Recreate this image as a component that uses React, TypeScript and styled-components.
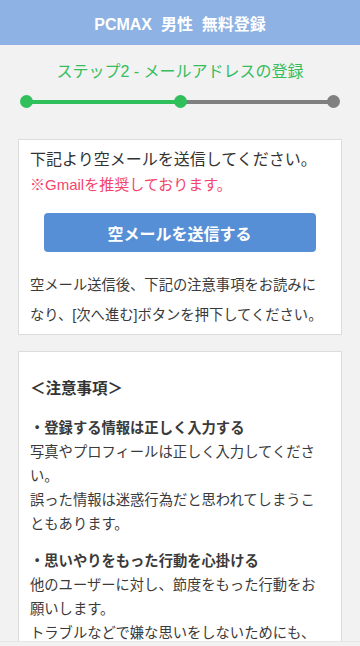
import React from "react";
import styled, { createGlobalStyle } from "styled-components";

const Global = createGlobalStyle`
  html, body { margin: 0; padding: 0; background: #f2f2f2; }
  body { font-family: "Liberation Sans", "Noto Sans CJK JP", sans-serif; color: #3a3a3a; }
  * { box-sizing: border-box; }
`;

const Header = styled.header`
  height: 45px;
  background: #8db2e3;
  display: flex;
  align-items: center;
  justify-content: center;
  color: #fff;
  font-weight: 700;
  font-size: 16px;
  white-space: pre;
`;

const Main = styled.main`
  padding: 0 18px;
`;

const StepTitle = styled.h2`
  margin: 15px 0 0;
  text-align: center;
  color: #36bd5c;
  font-weight: 400;
  font-size: 16px;
  line-height: 24px;
`;

const Track = styled.div`
  margin: 11px 8px 0;
  height: 13px;
  display: flex;
  align-items: center;
`;

const Segment = styled.div<{ $color: string }>`
  flex: 1;
  height: 4px;
  background: ${(p) => p.$color};
`;

const Dot = styled.span<{ $color: string }>`
  width: 13px;
  height: 13px;
  border-radius: 50%;
  background: ${(p) => p.$color};
  flex: none;
  margin: 0 -6px;
  position: relative;
  z-index: 1;
`;

const Card = styled.section<{ $top: number }>`
  margin-top: ${(p) => p.$top}px;
  background: #fff;
  border: 1px solid #dcdcdc;
  padding: 8px 12px 4px 11px;
`;

const Lead = styled.p`
  margin: 0;
  font-size: 16px;
  line-height: 24px;
  color: #333;
`;

const Note = styled.p`
  margin: 1px 0 0;
  font-size: 15px;
  line-height: 24px;
  color: #f4446c;
`;

const Button = styled.button`
  display: block;
  margin: 16px auto 0;
  width: 272px;
  height: 39px;
  border: none;
  border-radius: 4px;
  background: #578fd7;
  color: #fff;
  font-family: inherit;
  font-weight: 700;
  font-size: 16px;
`;

const Body = styled.p<{ $lh?: number; $top?: number }>`
  margin: ${(p) => p.$top ?? 0}px 0 0;
  font-size: 14.3px;
  line-height: ${(p) => p.$lh ?? 24}px;
  color: #3a3a3a;
`;

const NoticeCard = styled.section`
  margin-top: 16px;
  background: #fff;
  border: 1px solid #dcdcdc;
  border-bottom: none;
  padding: 25px 12px 20px 11px;
`;

const NoticeHeading = styled.h3`
  margin: 0;
  font-size: 15.5px;
  line-height: 24px;
  font-weight: 700;
  color: #333;
`;

const ItemTitle = styled.h4<{ $top: number }>`
  margin: ${(p) => p.$top}px 0 0;
  font-size: 14.3px;
  line-height: 24px;
  font-weight: 700;
  color: #3a3a3a;
`;

const BottomBar = styled.div`
  position: fixed;
  left: 0;
  right: 0;
  bottom: 0;
  height: 5px;
  background: #f1f1f1;
  border-top: 1px solid #e6e6e6;
`;

export default function App() {
  return (
    <>
      <Global />
      <Header>{"PCMAX  男性  無料登録"}</Header>
      <Main>
        <StepTitle>ステップ2 - メールアドレスの登録</StepTitle>
        <Track>
          <Dot $color="#2fbf5b" />
          <Segment $color="#2fbf5b" />
          <Dot $color="#2fbf5b" />
          <Segment $color="#808080" />
          <Dot $color="#808080" />
        </Track>
        <Card $top={31}>
          <Lead>下記より空メールを送信してください。</Lead>
          <Note>※Gmailを推奨しております。</Note>
          <Button>空メールを送信する</Button>
          <Body $lh={30} $top={18}>
            空メール送信後、下記の注意事項をお読みになり、[次へ進む]ボタンを押下してください。
          </Body>
        </Card>
        <NoticeCard>
          <NoticeHeading>＜注意事項＞</NoticeHeading>
          <ItemTitle $top={15}>・登録する情報は正しく入力する</ItemTitle>
          <Body>写真やプロフィールは正しく入力してください。</Body>
          <Body>誤った情報は迷惑行為だと思われてしまうこともあります。</Body>
          <ItemTitle $top={13}>・思いやりをもった行動を心掛ける</ItemTitle>
          <Body>他のユーザーに対し、節度をもった行動をお願いします。</Body>
          <Body>トラブルなどで嫌な思いをしないためにも、ルールを守ってご利用ください。</Body>
        </NoticeCard>
      </Main>
      <BottomBar />
    </>
  );
}
